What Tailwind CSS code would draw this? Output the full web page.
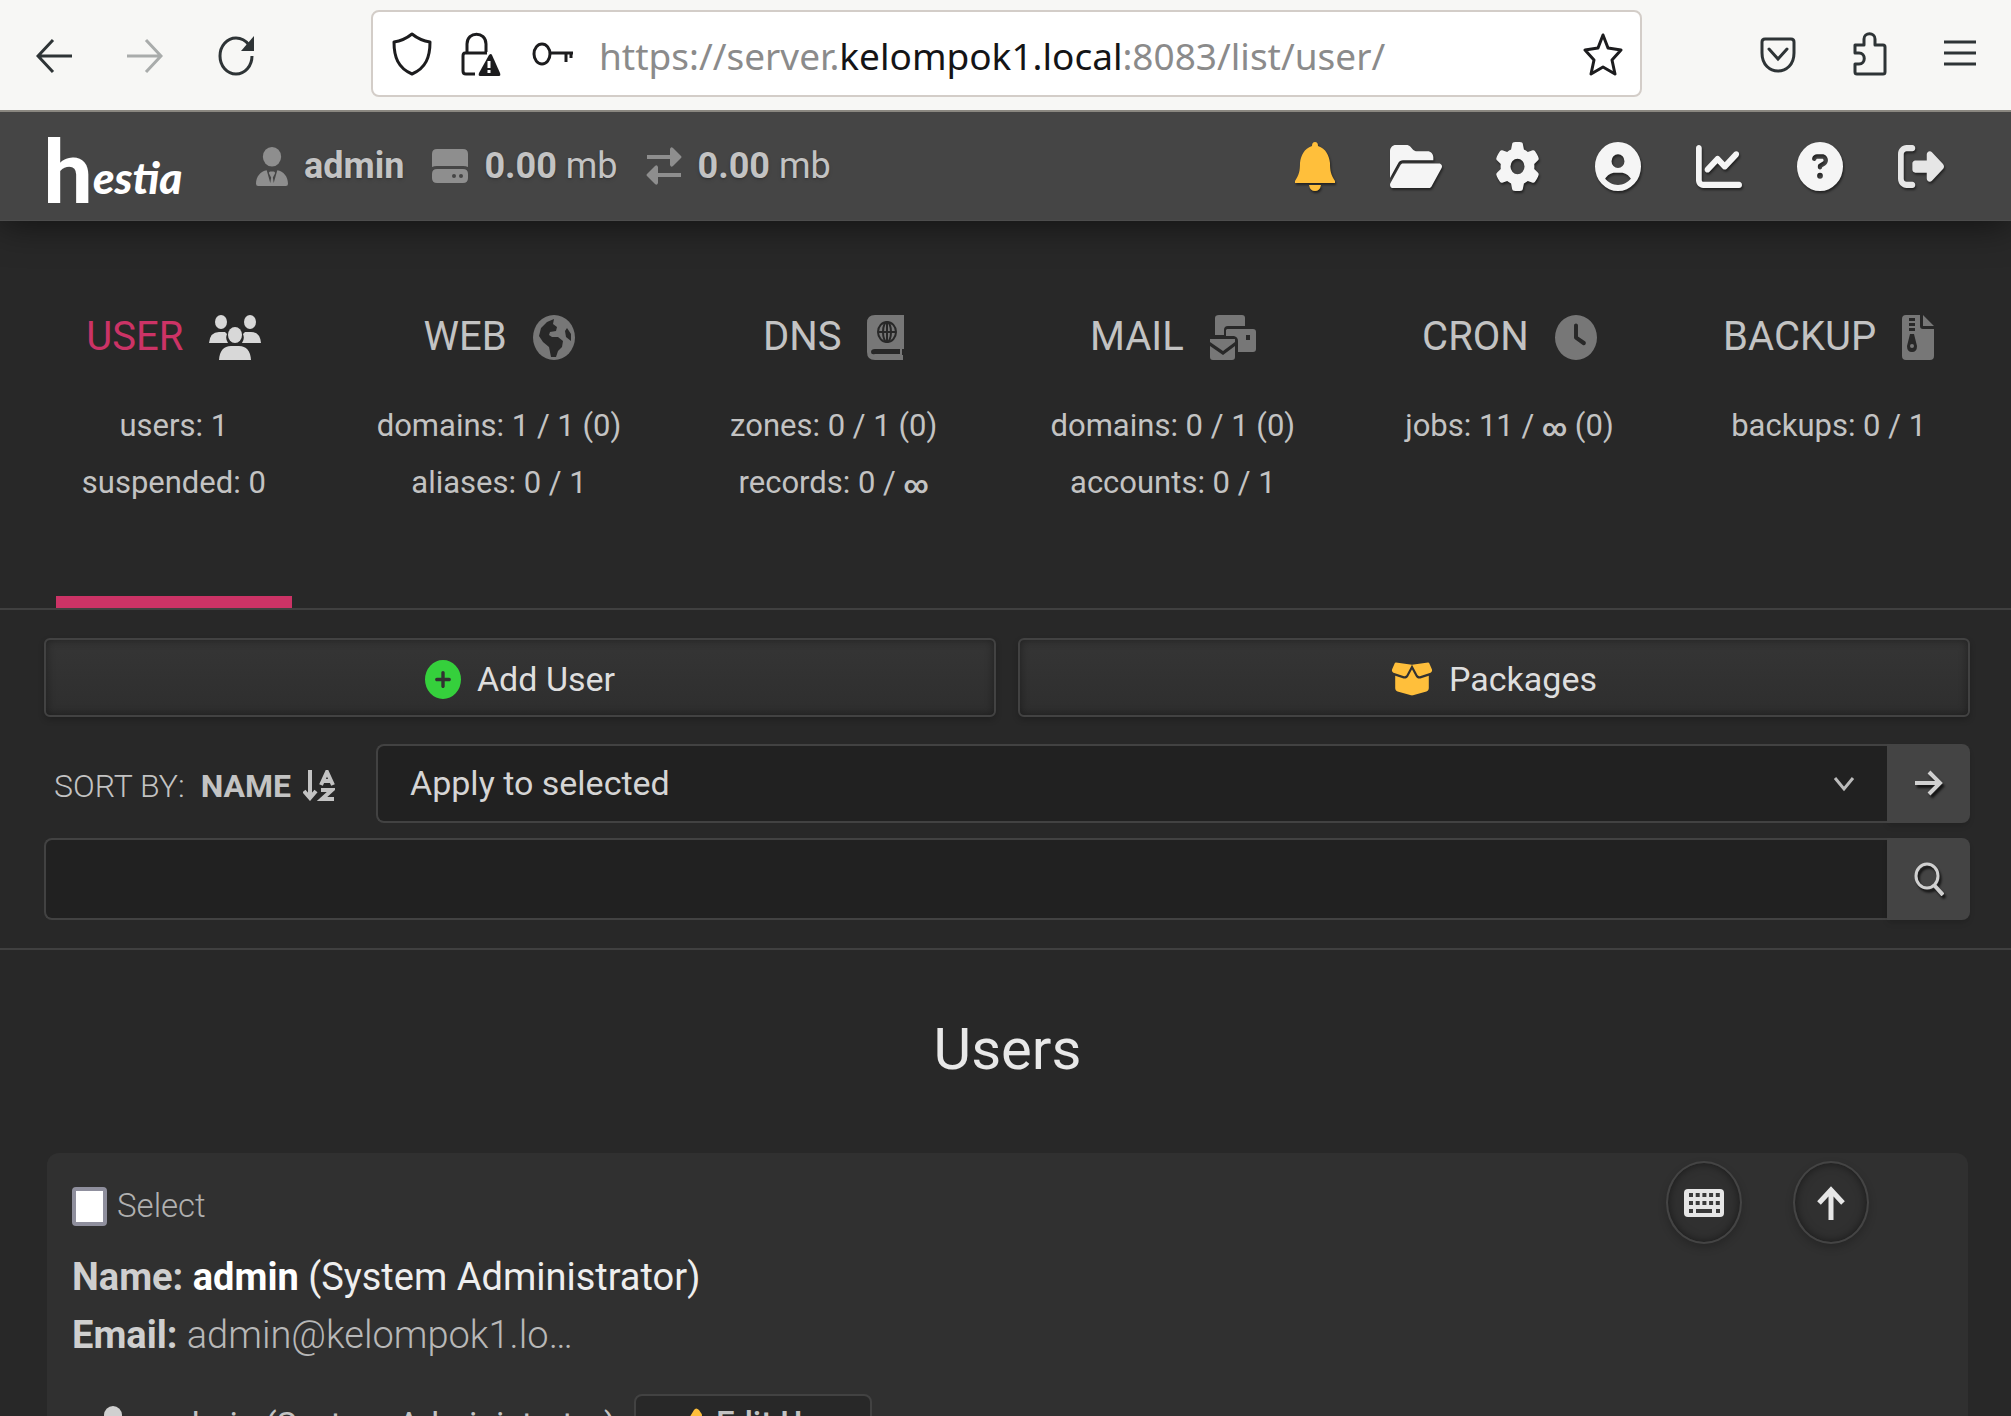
<!DOCTYPE html>
<html lang="en">
<head>
<meta charset="utf-8">
<meta name="viewport" content="width=device-width, initial-scale=1">
<title>Users - Hestia</title>
<script src="https://cdn.jsdelivr.net/npm/@tailwindcss/browser@4"></script>
</head>
<body class="h-screen overflow-hidden bg-[#282828] font-['Roboto','Liberation_Sans',sans-serif] text-[#c3c3c3]">

<!-- Browser toolbar -->
<div class="relative z-10 flex h-28 items-start border-b-2 border-[#8a8780] bg-[#f7f7f5] text-[#2e3436]">
  <nav class="flex w-[371px] shrink-0 items-center gap-[55px] pl-9 pt-9" aria-label="Browser navigation">
    <button type="button" aria-label="Back"><svg class="h-10 w-9" viewBox="0 0 36 40" preserveAspectRatio="none" fill="none" stroke="currentColor" stroke-width="3"><path d="M36 20H2M17 4 2 20l15 16"/></svg></button>
    <button type="button" aria-label="Forward" class="text-[#a9acab]"><svg class="h-10 w-9" viewBox="0 0 36 40" fill="none" stroke="currentColor" stroke-width="3"><path d="M0 20h34M19 4l15 16-15 16"/></svg></button>
    <button type="button" aria-label="Reload"><svg class="h-10 w-9" viewBox="0 0 36 40" fill="none" stroke="currentColor" stroke-width="3"><path d="M34 20c0 10-7 18-16 18S2 30 2 20 9 2 18 2c5 0 10 3 13 7"/><path d="M36 0v15H23z" fill="currentColor" stroke="none"/></svg></button>
  </nav>
  <div class="mt-2.5 flex h-[87px] grow items-center rounded-lg border-2 border-[#d3cdc8] bg-white pl-[19px] pr-[17px] text-[#1c1c1e]">
    <svg class="mr-[29px] h-11 w-10 shrink-0" viewBox="0 0 40 44" fill="none" stroke="currentColor" stroke-width="3" stroke-linejoin="round"><path d="M20 2c5 4 11 7 18 8 0 15-4 26-18 32C6 36 2 25 2 10 9 9 15 6 20 2z"/></svg>
    <svg class="mr-[31px] h-11 w-10 shrink-0" viewBox="0 0 40 44" fill="none" stroke="currentColor" stroke-width="3"><path d="M6 20V12c0-13 19-13 19 0v8M26 21H4q-2 0-2 3v15q0 3 3 3h9"/><path d="M28 23q2-2 3 0l8 18q1 3-1 3H19q-2 0-1-3z" fill="currentColor" stroke="none"/><path d="M28 29v7M28 38v3" stroke="#fff"/></svg>
    <svg class="mr-[26px] h-6 w-[41px] shrink-0" viewBox="0 0 41 24" fill="none" stroke="currentColor" stroke-width="3"><ellipse cx="10" cy="12" rx="8" ry="10"/><path d="M18 11h23M34 11v9M39 11v5"/></svg>
    <input aria-label="Address" class="sr-only" value="https://server.kelompok1.local:8083/list/user/">
    <span class="grow whitespace-nowrap pt-1 font-['Noto_Sans',sans-serif] text-[37px] leading-[44px] text-[#8b8b8b]">https://server.<span class="text-[#141416]">kelompok1.local</span>:8083/list/user/</span>
    <button type="button" aria-label="Bookmark this page"><svg class="h-11 w-10" viewBox="0 0 40 44" fill="none" stroke="currentColor" stroke-width="3" stroke-linejoin="round"><path d="m20 3 5 13 13 2-9 10 3 14-12-7-12 7 3-14L2 18l13-2z"/></svg></button>
  </div>
  <div class="flex w-[369px] shrink-0 items-center justify-end gap-[57px] pr-[35px] pt-8">
    <button type="button" aria-label="Save to Pocket"><svg class="h-11 w-9" viewBox="0 0 36 44" fill="none" stroke="currentColor" stroke-width="3" stroke-linecap="round"><path d="M5 7h26q3 0 3 3v11c0 24-32 24-32 0V10q0-3 3-3z"/><path d="m9 17 9 10 9-10"/></svg></button>
    <button type="button" aria-label="Extensions"><svg class="h-11 w-[34px]" viewBox="0 0 34 44" fill="none" stroke="currentColor" stroke-width="3" stroke-linejoin="round"><path d="M2 13h9V7c0-7 11-7 11 0v6h8q2 0 2 2v25q0 2-2 2H4q-2 0-2-2v-8h4c7 0 7-11 0-11H2z"/></svg></button>
    <button type="button" aria-label="Menu"><svg class="h-11 w-8" viewBox="0 0 32 44" stroke="currentColor" stroke-width="3"><path d="M0 10h32M0 21h32M0 32h32"/></svg></button>
  </div>
</div>

<!-- Panel header -->
<header class="flex h-[109px] items-center justify-between border-b border-[#4d4d4d] bg-[#454545] pl-[43px] pr-[66px] shadow-[0_4px_36px_rgba(0,0,0,0.55)]">
  <div class="flex items-center">
    <a href="#" aria-label="Hestia" class="flex w-[213px] items-end pt-1.5 font-['Lato',sans-serif] font-black text-white"><span class="text-[88px] leading-[88px]">h</span><span class="text-[44px] italic leading-[72px]">estia</span></a>
    <div class="flex items-center gap-7 text-[36px] text-[#c3c3c3] text-shadow-md">
      <span class="flex items-center gap-4"><svg class="h-[39px] w-8 text-[#8e8e8e]" viewBox="0 0 448 512" preserveAspectRatio="none" fill="currentColor"><circle cx="224" cy="128" r="128"/><path d="M0 482c0-90 64-166 150-176l50 166 12-70-28-50q-10-30 20-32h40q30 2 20 32l-28 50 12 70 50-166c86 10 150 86 150 176q0 30-30 30H30q-30 0-30-30z"/></svg><b>admin</b></span>
      <span class="flex items-center gap-4"><svg class="h-[34px] w-9 text-[#8e8e8e]" viewBox="0 0 36 34" fill="currentColor"><path d="M5 0h26q5 0 5 5v13q-2-1-5-1H5q-3 0-5 1V5q0-5 5-5zM5 20h26q5 0 5 5v4q0 5-5 5H5q-5 0-5-5v-4q0-5 5-5zm17 5a2 2 0 1 0 0 4 2 2 0 1 0 0-4zm7 0a2 2 0 1 0 0 4 2 2 0 1 0 0-4z"/></svg><span><b>0.00</b> mb</span></span>
      <span class="flex items-center gap-4"><svg class="h-[38px] w-9 text-[#8e8e8e]" viewBox="0 0 36 38" fill="currentColor"><path d="M1 8h23V2q1-3 3-1l8 8q1 1 0 2l-8 8q-2 2-3-1v-6H1zM35 26H12v-6q-1-3-3-1l-8 8q-1 1 0 2l8 8q2 2 3-1v-6h23z"/></svg><span><b>0.00</b> mb</span></span>
    </div>
  </div>
  <nav class="flex items-center gap-[53px] text-[#f5f5f5] *:flex *:w-12 *:justify-center *:drop-shadow-[1px_2px_1px_rgba(0,0,0,0.5)]" aria-label="Account">
    <a href="#" aria-label="Notifications" class="text-[#ffbf3b]"><svg class="h-[49px] w-10" viewBox="0 0 40 49" fill="currentColor"><path d="M20 0q3 0 3 4c8 3 11 9 12 17 0 8 1 12 5 18v2H0v-2c4-6 5-10 5-18C6 13 9 7 17 4q0-4 3-4zM14 43h12q-1 6-6 6t-6-6z"/></svg></a>
    <a href="#" aria-label="File manager"><svg class="h-[49px] w-[52px] shrink-0" viewBox="0 0 576 512" preserveAspectRatio="none" fill="currentColor"><path d="M88.700 223.800L0 375.800V96C0 60.700 28.700 32 64 32H181.500c17 0 33.300 6.700 45.300 18.700l26.500 26.500c12 12 28.300 18.700 45.300 18.700H416c35.300 0 64 28.700 64 64v32H144c-22.800 0-43.800 12.100-55.300 31.800zm27.600 16.100C122.100 230 132.600 224 144 224H544c11.500 0 22 6.100 27.700 16.100s5.700 22.200-.1 32.100l-112 192C453.900 474 443.400 480 432 480H32c-11.500 0-22-6.100-27.700-16.100s-5.700-22.200 .1-32.100l112-192z"/></svg></a>
    <a href="#" aria-label="Server settings"><svg class="h-[49px] w-[45px]" viewBox="0 0 512 512" preserveAspectRatio="none" fill="currentColor"><path d="M495.900 166.600c3.200 8.700 .5 18.400-6.400 24.600l-43.300 39.400c1.100 8.300 1.700 16.800 1.700 25.400s-.6 17.100-1.700 25.400l43.300 39.400c6.900 6.200 9.600 15.900 6.400 24.600c-4.400 11.900-9.700 23.300-15.800 34.300l-4.700 8.100c-6.600 11-14 21.400-22.100 31.200c-5.900 7.200-15.700 9.600-24.500 6.800l-55.700-17.700c-13.400 10.300-28.200 18.900-44 25.400l-12.500 57.100c-2 9.100-9 16.300-18.200 17.800c-13.800 2.300-28 3.500-42.500 3.500s-28.700-1.200-42.500-3.500c-9.200-1.500-16.200-8.700-18.200-17.800l-12.500-57.100c-15.800-6.500-30.600-15.100-44-25.400L83.100 425.900c-8.800 2.800-18.600 .3-24.500-6.800c-8.100-9.800-15.500-20.200-22.100-31.200l-4.700-8.100c-6.100-11-11.400-22.400-15.800-34.300c-3.200-8.700-.5-18.400 6.400-24.600l43.300-39.400C64.600 273.100 64 264.600 64 256s.6-17.100 1.700-25.400L22.400 191.200c-6.900-6.200-9.600-15.900-6.400-24.600c4.400-11.900 9.700-23.300 15.800-34.300l4.700-8.100c6.600-11 14-21.400 22.100-31.200c5.900-7.200 15.700-9.600 24.500-6.800l55.700 17.700c13.400-10.300 28.200-18.900 44-25.400l12.500-57.100c2-9.100 9-16.300 18.200-17.800C227.300 1.200 241.500 0 256 0s28.700 1.200 42.500 3.500c9.200 1.500 16.200 8.700 18.200 17.800l12.500 57.100c15.800 6.500 30.600 15.100 44 25.400l55.700-17.700c8.800-2.800 18.600-.3 24.500 6.800c8.100 9.800 15.500 20.200 22.100 31.200l4.700 8.100c6.100 11 11.400 22.400 15.800 34.300zM256 336a80 80 0 1 0 0-160 80 80 0 1 0 0 160z"/></svg></a>
    <a href="#" aria-label="Profile"><svg class="h-[49px] w-[46px]" viewBox="0 0 512 512" preserveAspectRatio="none" fill="currentColor"><path d="M399 384.200C376.900 345.800 335.400 320 288 320H224c-47.400 0-88.900 25.800-111 64.200c35.200 39.200 86.200 63.800 143 63.800s107.800-24.700 143-63.800zM0 256a256 256 0 1 1 512 0A256 256 0 1 1 0 256zm256 16a72 72 0 1 0 0-144 72 72 0 1 0 0 144z"/></svg></a>
    <a href="#" aria-label="Statistics"><svg class="h-[49px] w-[46px]" viewBox="0 0 512 512" preserveAspectRatio="none" fill="currentColor"><path d="M64 64c0-17.700-14.300-32-32-32S0 46.300 0 64V400c0 44.200 35.800 80 80 80H480c17.700 0 32-14.300 32-32s-14.300-32-32-32H80c-8.800 0-16-7.200-16-16V64zm406.600 86.600c12.500-12.500 12.500-32.800 0-45.300s-32.800-12.500-45.300 0L320 210.700l-57.400-57.400c-12.500-12.500-32.800-12.500-45.300 0l-112 112c-12.500 12.500-12.500 32.800 0 45.300s32.800 12.500 45.300 0L240 221.300l57.400 57.400c12.500 12.500 32.800 12.500 45.300 0l128-128z"/></svg></a>
    <a href="#" aria-label="Help"><svg class="h-[49px] w-[46px]" viewBox="0 0 512 512" preserveAspectRatio="none" fill="currentColor"><path d="M256 512A256 256 0 1 0 256 0a256 256 0 1 0 0 512zM169.800 165.300c7.900-22.300 29.100-37.300 52.800-37.300h58.300c34.900 0 63.100 28.300 63.100 63.100c0 22.600-12.100 43.500-31.700 54.800L280 264.400c-.2 13-10.900 23.600-24 23.600c-13.300 0-24-10.700-24-24V250.500c0-8.600 4.600-16.500 12.100-20.800l44.300-25.400c4.700-2.700 7.600-7.700 7.600-13.100c0-8.400-6.800-15.100-15.100-15.100H222.600c-3.400 0-6.400 2.100-7.500 5.300l-.4 1.200c-4.400 12.500-18.200 19-30.600 14.600s-19-18.200-14.600-30.600l.3-1.200zM224 352a32 32 0 1 1 64 0 32 32 0 1 1 -64 0z"/></svg></a>
    <a href="#" aria-label="Log out" class="text-[#e6e6e6]"><svg class="h-[49px] w-[46px]" viewBox="0 0 512 512" preserveAspectRatio="none" fill="currentColor"><path d="M377.900 105.900L500.700 228.700c7.200 7.200 11.300 17.100 11.300 27.300s-4.100 20.100-11.300 27.300L377.900 406.100c-6.400 6.400-15 9.900-24 9.900c-18.700 0-33.900-15.200-33.900-33.900l0-62.100-128 0c-17.700 0-32-14.300-32-32l0-64c0-17.700 14.300-32 32-32l128 0 0-62.100c0-18.700 15.200-33.900 33.900-33.900c9 0 17.600 3.600 24 9.900zM160 96L96 96c-17.700 0-32 14.300-32 32l0 256c0 17.700 14.300 32 32 32l64 0c17.700 0 32 14.300 32 32s-14.300 32-32 32l-64 0c-53 0-96-43-96-96L0 128C0 75 43 32 96 32l64 0c17.700 0 32 14.300 32 32s-14.300 32-32 32z"/></svg></a>
  </nav>
</header>

<!-- Section tabs -->
<nav class="grid grid-cols-[236fr_285fr_255fr_294fr_250fr_259fr] gap-[65px] border-b-2 border-[#404040] pl-14 pr-[53px] text-center text-[31px] leading-[57px] whitespace-nowrap *:flex *:h-[387px] *:flex-col *:items-center *:pt-[86px]" aria-label="Sections">
  <a href="#" class="border-b-12 border-[#cc3366]" aria-current="page">
    <span class="mb-[30px] flex items-center gap-[26px] text-[40px] leading-[60px] text-[#cc3366]">USER <svg class="h-[45px] w-[52px] text-[#d8d8d8]" viewBox="0 0 52 45" fill="currentColor"><ellipse cx="12" cy="7" rx="6" ry="7"/><ellipse cx="41" cy="7" rx="6" ry="7"/><path d="M0 28q1-11 10-11h6l2 2q-2 5 1 9zM52 28q-1-11-10-11h-6l-2 2q2 5-1 9z"/><ellipse cx="26" cy="20" rx="7" ry="8"/><path d="M10 45q1-14 12-14h8q11 0 12 14z"/></svg></span>
    <span class="flex flex-col"><span>users: 1</span><span>suspended: 0</span></span>
  </a>
  <a href="#">
    <span class="mb-[30px] flex items-center gap-[26px] text-[40px] leading-[60px]">WEB <svg class="h-[45px] w-[42px] text-[#777]" viewBox="0 0 42 45" fill="currentColor"><ellipse cx="21" cy="22.500" rx="21" ry="22.500"/><path fill="#282828" d="m21 4-1 5 4 3-1 4-6 1-1 3 3 2h6l5 4-1 6-4 4-2 6-5 0-2-10-6-5-4-6 2-8 6-6zM34 13l4 6v7l-5-4-1-6z"/></svg></span>
    <span class="flex flex-col"><span>domains: 1 / 1 (0)</span><span>aliases: 0 / 1</span></span>
  </a>
  <a href="#">
    <span class="mb-[30px] flex items-center gap-[26px] text-[40px] leading-[60px]">DNS <svg class="h-[45px] w-[37px] text-[#777]" viewBox="0 0 37 45" fill="currentColor"><path fill-rule="evenodd" d="M8 0h29v34h-2v6h1v5H8q-8 0-8-8V8q0-8 8-8zM8 34q-4 0-4 3t4 2h25v-5z"/><g fill="none" stroke="#282828" stroke-width="2"><ellipse cx="20" cy="17" rx="9" ry="10"/><ellipse cx="20" cy="17" rx="4" ry="10"/><path d="M11 17h18M20 7v20"/></g></svg></span>
    <span class="flex flex-col"><span>zones: 0 / 1 (0)</span><span>records: 0 / <b class="text-2xl">∞</b></span></span>
  </a>
  <a href="#">
    <span class="mb-[30px] flex items-center gap-[26px] text-[40px] leading-[60px]">MAIL <svg class="h-[45px] w-[46px] text-[#777]" viewBox="0 0 46 45" fill="currentColor"><path d="M9 0h23q3 0 3 3v8H18q-4 0-4 4v5H5V3q0-3 4-3z"/><path fill-rule="evenodd" d="M17 14h26q3 0 3 3v17q0 3-3 3H28V26q0-4-4-5h-8v-6zM36 20v5h4v-5z"/><path d="M0 24h25v3l-12 9L0 27zM0 31l13 9 12-9v11q0 3-3 3H3q-3 0-3-3z"/></svg></span>
    <span class="flex flex-col"><span>domains: 0 / 1 (0)</span><span>accounts: 0 / 1</span></span>
  </a>
  <a href="#">
    <span class="mb-[30px] flex items-center gap-[26px] text-[40px] leading-[60px]">CRON <svg class="h-[45px] w-[42px] text-[#777]" viewBox="0 0 512 512" preserveAspectRatio="none" fill="currentColor"><path d="M256 0a256 256 0 1 1 0 512A256 256 0 1 1 256 0zM232 120V256c0 8 4 15.500 10.700 20l96 64c11 7.400 25.900 4.400 33.300-6.700s4.400-25.900-6.700-33.300L280 243.200V120c0-13.300-10.700-24-24-24s-24 10.700-24 24z"/></svg></span>
    <span class="flex flex-col"><span>jobs: 11 / <b class="text-2xl leading-[57px]">∞</b> (0)</span></span>
  </a>
  <a href="#">
    <span class="mb-[30px] flex items-center gap-[26px] text-[40px] leading-[60px]">BACKUP <svg class="h-[45px] w-8 text-[#777]" viewBox="0 0 32 45" fill="currentColor"><path d="M4 0h14v11q0 3 3 3h11v27q0 4-4 4H4q-4 0-4-4V4q0-4 4-4zM21 0l11 11H21z"/><path fill="#282828" d="M7 3h6v3H7zM7 8h6v3H7zM7 13h6v3H7zM8 19h4l3 12q0 6-5 6t-5-6z"/><ellipse cx="10" cy="31" rx="2" ry="2"/></svg></span>
    <span class="flex flex-col"><span>backups: 0 / 1</span></span>
  </a>
</nav>

<!-- Actions -->
<section class="flex flex-col border-b-2 border-[#404040] pl-11 pr-[41px] pb-7 pt-7 text-[34px]" aria-label="Actions">
  <div class="mb-[27px] grid grid-cols-2 gap-[22px] text-[#dedede] *:flex *:h-[79px] *:items-center *:justify-center *:gap-4 *:rounded-md *:border-2 *:border-[#424242] *:bg-linear-to-b *:from-[#353535] *:to-[#2e2e2e] *:pt-[3px] *:shadow-[inset_0_0_10px_rgba(0,0,0,0.4),0_3px_6px_rgba(0,0,0,0.2)]">
    <a href="#"><svg class="h-[39px] w-9 text-[#35d03c]" viewBox="0 0 512 512" preserveAspectRatio="none" fill="currentColor"><path d="M256 512A256 256 0 1 0 256 0a256 256 0 1 0 0 512zM232 344V280H168c-13.300 0-24-10.700-24-24s10.700-24 24-24h64V168c0-13.300 10.700-24 24-24s24 10.700 24 24v64h64c13.300 0 24 10.700 24 24s-10.700 24-24 24H280v64c0 13.300-10.700 24-24 24s-24-10.700-24-24z"/></svg>Add User</a>
    <a href="#"><svg class="h-[38px] w-[42px] text-[#ffbf3b]" viewBox="0 0 640 512" preserveAspectRatio="none" fill="currentColor"><path d="M58.900 42.100c3-6.100 9.600-9.600 16.300-8.700L320 64 564.800 33.400c6.700-.8 13.300 2.700 16.300 8.700l41.700 83.400c9 17.900-.6 39.600-19.800 45.100L439.600 217.300c-13.900 4-28.800-1.900-36.200-14.300L320 64 236.600 203c-7.400 12.400-22.300 18.300-36.200 14.300L37.100 170.600c-19.300-5.500-28.800-27.200-19.800-45.100L58.900 42.100zM321.100 128l54.900 91.400c14.900 24.800 44.600 36.600 72.500 28.600L576 211.600v167c0 22-15 41.200-36.400 46.600l-204.100 51c-10.200 2.600-20.900 2.600-31 0l-204.100-51C79 419.700 64 400.500 64 378.500v-167L191.600 248c27.800 8 57.600-3.800 72.500-28.600L318.900 128h2.200z"/></svg>Packages</a>
  </div>
  <form class="mb-[15px] flex h-[79px]">
    <button type="button" class="flex w-[332px] shrink-0 items-center gap-4 pl-2.5 pt-1 text-[32px]"><span class="font-light">SORT BY:</span><span class="flex items-center gap-3"><b>NAME</b><svg class="h-[31px] w-8" viewBox="0 0 32 31" fill="none" stroke="currentColor" stroke-width="4"><path d="M7 0v28M1 21l6 7 6-7"/><path d="m18 15 6-13 6 13M20 11h8M18 20h11l-10 9h12"/></svg></span></button>
    <div class="relative grow">
      <select aria-label="Apply to selected" class="h-full w-full appearance-none rounded-l-lg border-2 border-r-0 border-[#424242] bg-[#212121] px-8 text-[34px] text-[#d5d5d5]"><option>Apply to selected</option></select>
      <svg class="pointer-events-none absolute right-8 top-8 h-4 w-[22px]" viewBox="0 0 22 16" fill="none" stroke="#bbb" stroke-width="3"><path d="m2 2 9 11 9-11"/></svg>
    </div>
    <button type="submit" aria-label="Apply" class="flex w-[83px] shrink-0 items-center justify-center rounded-r-lg bg-[#444] shadow-md"><svg class="h-[27px] w-7 drop-shadow-[2px_3px_1px_rgba(0,0,0,0.7)]" viewBox="0 0 28 27" fill="none" stroke="#d0d0d0" stroke-width="4"><path d="M0 13h25M14 2l11 11-11 11"/></svg></button>
  </form>
  <form class="flex h-[82px]" role="search">
    <input type="search" aria-label="Search" class="h-full min-w-0 grow rounded-l-lg border-2 border-r-0 border-[#424242] bg-[#212121] px-8">
    <button type="submit" aria-label="Search" class="flex w-[83px] shrink-0 items-center justify-center rounded-r-lg bg-[#444] shadow-md"><svg class="h-[34px] w-[30px] drop-shadow-[2px_3px_1px_rgba(0,0,0,0.7)]" viewBox="0 0 30 34" fill="none" stroke="#d0d0d0" stroke-width="3"><ellipse cx="13" cy="14" rx="11" ry="12"/><path d="m20 23 9 10" stroke-width="4"/></svg></button>
  </form>
</section>

<!-- User list -->
<main class="pl-[47px] pr-[43px]">
  <h1 class="pb-16 pt-[59px] text-center text-[58px] leading-[80px] text-[#e8e8e8]">Users</h1>
  <article class="relative rounded-xl bg-[#303030] pl-[25px] pt-[33px] text-[38px] leading-[58px]">
    <label class="mb-[22px] flex h-10 items-center gap-2.5 text-[33px] font-light text-[#b0b0b0]"><input type="checkbox" class="h-[39px] w-[35px] appearance-none rounded-sm border-4 border-[#8f8f9d] bg-white">Select</label>
    <p class="text-[#eee]"><b class="text-[#cfcfcf]">Name:</b> <b class="text-white">admin</b> (System Administrator)</p>
    <p class="font-light text-[#b8b8b8]"><span class="font-bold text-[#cfcfcf]">Email:</span> admin@kelompok1.lo…</p>
    <div class="mt-[30px] flex h-[60px] items-center text-[34px]">
      <svg class="ml-[18px] mr-3 h-[39px] w-[60px]" viewBox="0 0 60 39" fill="#d0d0d0"><circle cx="23" cy="10" r="9"/><path d="M7 39q0-16 13-16h8q5 0 8 2-2 4-1 14zM39 28h22v11H39z"/><path d="M43 29v-4q7-11 13 0v4" fill="none" stroke="#d0d0d0" stroke-width="3"/></svg>
      <span class="mr-[18px]">admin (System Administrator)</span>
      <button type="button" class="flex h-full w-[238px] items-center gap-3.5 rounded-lg border-2 border-[#424242] bg-[#282828] pl-11 text-[33px] font-medium leading-[40px]"><svg class="h-8 w-[22px]" viewBox="0 0 22 32" fill="#ffbf3b"><path d="M0 25 14 2q2-3 5 0l2 3q2 2 0 5L8 30l-8 2z"/></svg>Edit User</button>
    </div>
    <div class="absolute right-[99px] top-2 flex gap-[51px] *:flex *:h-[83px] *:w-[76px] *:items-center *:justify-center *:rounded-[50%] *:border-2 *:border-[#444] *:bg-[#303030] *:shadow-[inset_0_0_10px_rgba(0,0,0,0.5),0_4px_8px_rgba(0,0,0,0.2)]">
      <button type="button" aria-label="Keyboard shortcuts"><svg class="h-7 w-10" viewBox="0 0 40 28"><rect width="40" height="28" rx="4" fill="#e6e6e6"/><path d="M5 6h31M5 14h31" stroke="#3a3a3a" stroke-width="4" stroke-dasharray="4 2.700"/><path d="M5 22h4M12 22h16M32 22h4" stroke="#3a3a3a" stroke-width="4"/></svg></button>
      <button type="button" aria-label="Back to top"><svg class="h-[34px] w-7" viewBox="0 0 28 34" fill="none" stroke="#e6e6e6" stroke-width="5"><path d="M14 34V4M2 17 14 4l12 13"/></svg></button>
    </div>
  </article>
</main>
</body>
</html>
